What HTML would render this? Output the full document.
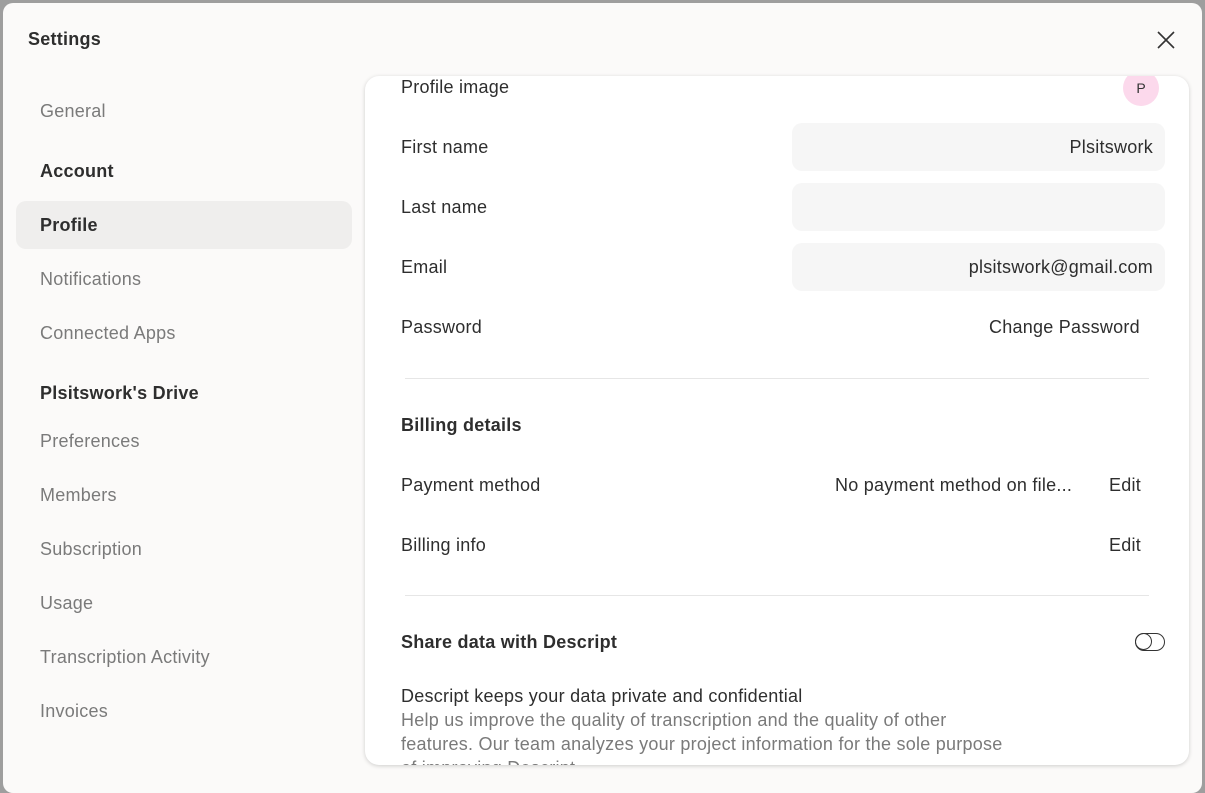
<!DOCTYPE html>
<html><head><style>
*{margin:0;padding:0;box-sizing:border-box}
body{width:1205px;height:778px;background:#9e9e9e;font-family:"Liberation Sans",sans-serif;overflow:hidden;position:relative}
.dlg{position:absolute;left:3px;top:3px;width:1199px;height:790px;background:#fbfaf9;border-radius:10px}
.t{position:absolute;color:#2e2e2e;font-size:18px;white-space:nowrap;letter-spacing:0.25px}
.s{color:#7a7a7a}
.b{font-weight:bold}
.sel{position:absolute;left:13px;top:198px;width:336px;height:48px;background:#efeeed;border-radius:10px}
.card{position:absolute;left:362px;top:73px;width:824px;height:689px;background:#fff;border-radius:14px;box-shadow:0 1px 4px rgba(0,0,0,.18);overflow:hidden}
.in{position:absolute;left:427px;width:373px;height:48px;background:#f6f6f6;border-radius:10px;font-size:18px;color:#2e2e2e;text-align:right;padding-right:12px;line-height:48px;letter-spacing:0.25px}
.hr{position:absolute;left:40px;width:744px;height:1px;background:#e6e6e6}
</style></head><body>
<div class="dlg">
<div class="t b" style="left:25px;top:26px">Settings</div>
<svg style="position:absolute;left:1154px;top:28px" width="18" height="18"><path d="M1 1L17 17M17 1L1 17" stroke="#333" stroke-width="1.6"/></svg>
<div class="sel"></div>
<div class="t s" style="left:37px;top:98px">General</div>
<div class="t b" style="left:37px;top:158px">Account</div>
<div class="t b" style="left:37px;top:212px">Profile</div>
<div class="t s" style="left:37px;top:266px">Notifications</div>
<div class="t s" style="left:37px;top:320px">Connected Apps</div>
<div class="t b" style="left:37px;top:380px">Plsitswork's Drive</div>
<div class="t s" style="left:37px;top:428px">Preferences</div>
<div class="t s" style="left:37px;top:482px">Members</div>
<div class="t s" style="left:37px;top:536px">Subscription</div>
<div class="t s" style="left:37px;top:590px">Usage</div>
<div class="t s" style="left:37px;top:644px">Transcription Activity</div>
<div class="t s" style="left:37px;top:698px">Invoices</div>
<div class="card">
<div class="t" style="left:36px;top:1px">Profile image</div>
<div style="position:absolute;left:758px;top:-6px;width:36px;height:36px;border-radius:50%;background:#fcd9ec;font-size:14px;text-align:center;line-height:36px;color:#333">P</div>
<div class="t" style="left:36px;top:61px">First name</div>
<div class="in" style="top:47px">Plsitswork</div>
<div class="t" style="left:36px;top:121px">Last name</div>
<div class="in" style="top:107px"></div>
<div class="t" style="left:36px;top:181px">Email</div>
<div class="in" style="top:167px">plsitswork@gmail.com</div>
<div class="t" style="left:36px;top:241px">Password</div>
<div class="t" style="left:624px;top:241px">Change Password</div>
<div class="hr" style="top:302px"></div>
<div class="t b" style="left:36px;top:339px">Billing details</div>
<div class="t" style="left:36px;top:399px">Payment method</div>
<div class="t" style="left:470px;top:399px">No payment method on file...</div>
<div class="t" style="left:744px;top:399px">Edit</div>
<div class="t" style="left:36px;top:459px">Billing info</div>
<div class="t" style="left:744px;top:459px">Edit</div>
<div class="hr" style="top:519px"></div>
<div class="t b" style="left:36px;top:556px">Share data with Descript</div>
<div style="position:absolute;left:770px;top:557px;width:30px;height:18px;border:1.5px solid #333;border-radius:9px"><div style="position:absolute;left:-1px;top:-1px;width:17px;height:17px;border:1.5px solid #333;border-radius:50%"></div></div>
<div class="t" style="left:36px;top:610px">Descript keeps your data private and confidential</div>
<div class="t s" style="left:36px;top:634px">Help us improve the quality of transcription and the quality of other</div>
<div class="t s" style="left:36px;top:658px">features. Our team analyzes your project information for the sole purpose</div>
<div class="t s" style="left:36px;top:682px">of improving Descript.</div>
</div>
</div>
</body></html>
